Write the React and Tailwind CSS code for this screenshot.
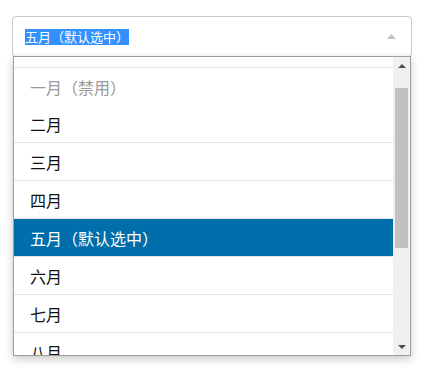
import React from 'react';

const months = [
    { label: '二月' },
    { label: '三月' },
    { label: '四月' },
    { label: '五月（默认选中）', selected: true },
    { label: '六月' },
    { label: '七月' },
    { label: '八月' },
];

function Triangle({ dir = 'up', className }) {
    const points = dir === 'up' ? '0,5 4.5,0 9,5' : '0,0 4.5,5 9,0';
    return (
        <svg width="9" height="5" viewBox="0 0 9 5" className={className}>
            <polygon points={points} fill="currentColor" />
        </svg>
    );
}

function Scrollbar() {
    return (
        <div className="w-[17px] shrink-0 bg-[#f0f0f0] flex flex-col">
            <div className="h-[17px] flex items-center justify-center text-[#505050]">
                <svg width="8" height="4" viewBox="0 0 8 4"><polygon points="0,4 4,0 8,4" fill="currentColor" /></svg>
            </div>
            <div className="flex-1 flex flex-col">
                <div className="mt-[14px] mx-[2px] h-[160px] bg-[#c1c1c1]" />
            </div>
            <div className="h-[17px] flex items-center justify-center text-[#505050]">
                <svg width="8" height="4" viewBox="0 0 8 4"><polygon points="0,0 4,4 8,0" fill="currentColor" /></svg>
            </div>
        </div>
    );
}

export default function App() {
    return (
        <div
            className="min-h-[371px] bg-white pt-[16px] pl-[12px]"
            style={{ fontFamily: '"Noto Sans CJK SC", "Noto Sans", sans-serif' }}
        >
            <div className="relative w-[400px]">
                {/* closed select showing the chosen month */}
                <div className="h-[41px] border border-[#c8c8c8] rounded-[4px] flex items-center justify-between pl-[12px] pr-[15px]">
                    <span className="text-[13px] leading-[16px] text-white bg-[#3390ff]">五月（默认选中）</span>
                    <Triangle dir="up" className="text-[#c4c4c4]" />
                </div>

                {/* open option list */}
                <div className="absolute top-[40px] left-[1px] w-[398px] h-[300px] bg-white border border-[#9e9e9e] shadow-[0_3px_8px_rgba(0,0,0,0.22)] flex">
                    <div className="flex-1 overflow-hidden flex flex-col">
                        <div className="h-[11px] shrink-0 border-b border-[#e3e3e3]" />
                        <div className="h-[37px] shrink-0 flex items-center pl-[16px] text-[16px] text-[#999]">
                            一月（禁用）
                        </div>
                        {months.map((m) => (
                            <div
                                key={m.label}
                                className={
                                    m.selected
                                        ? 'h-[38px] shrink-0 flex items-center pl-[16px] text-[16px] bg-[#006eaa] text-white border-b border-[#e3e3e3]'
                                        : 'h-[38px] shrink-0 flex items-center pl-[16px] text-[16px] text-[#111] border-b border-[#e3e3e3]'
                                }
                            >
                                {m.label}
                            </div>
                        ))}
                    </div>
                    <Scrollbar />
                </div>
            </div>
        </div>
    );
}
